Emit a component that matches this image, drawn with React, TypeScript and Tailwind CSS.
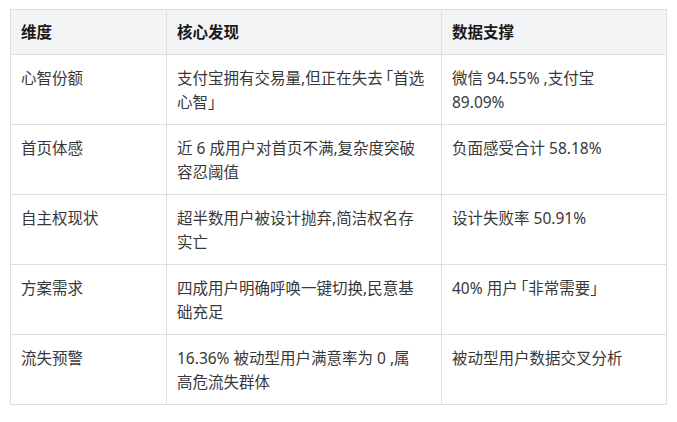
import React from "react";

const L = () => <span className="-ml-[5px]">「</span>;
const R = () => <span>」</span>;

const rows: [string, React.ReactNode, React.ReactNode][] = [
  ["心智份额", <>支付宝拥有交易量,但正在失去<L />首选<br />心智<R /></>, <>微信 94.55% ,支付宝<br />89.09%</>],
  ["首页体感", <>近 6 成用户对首页不满,复杂度突破<br />容忍阈值</>, <>负面感受合计 58.18%</>],
  ["自主权现状", <>超半数用户被设计抛弃,简洁权名存<br />实亡</>, <>设计失败率 50.91%</>],
  ["方案需求", <>四成用户明确呼唤一键切换,民意基<br />础充足</>, <>40% 用户<L />非常需要<R /></>],
  ["流失预警", <>16.36% 被动型用户满意率为 0 ,属<br />高危流失群体</>, <>被动型用户数据交叉分析</>],
];

const cell = "border border-[#dcdee2] px-[10px] pt-[11px] pb-[10px] align-top leading-6 whitespace-nowrap";

export default function App() {
  return (
    <div
      className="w-[677px] h-[422px] bg-white pl-[10px] pt-[9px] text-[15.5px] text-[#383838]"
      style={{ fontFamily: '"Noto Sans", "Noto Sans CJK SC", sans-serif' }}
    >
      <table className="w-[656px] table-fixed border-collapse">
        <colgroup>
          <col className="w-[156px]" />
          <col className="w-[275px]" />
          <col className="w-[225px]" />
        </colgroup>
        <thead>
          <tr className="bg-[#f3f4f6]">
            {["维度", "核心发现", "数据支撑"].map((h) => (
              <th
                key={h}
                className="border border-[#dcdee2] px-[10px] py-[10px] text-left align-top font-bold leading-6 text-[#1a1a1a] whitespace-nowrap"
              >
                <div className="h-6">{h}</div>
              </th>
            ))}
          </tr>
        </thead>
        <tbody>
          {rows.map(([a, b, c], i) => (
            <tr key={i}>
              <td className={cell}><div className="h-12">{a}</div></td>
              <td className={cell}><div className="h-12">{b}</div></td>
              <td className={cell}><div className="h-12">{c}</div></td>
            </tr>
          ))}
        </tbody>
      </table>
    </div>
  );
}
